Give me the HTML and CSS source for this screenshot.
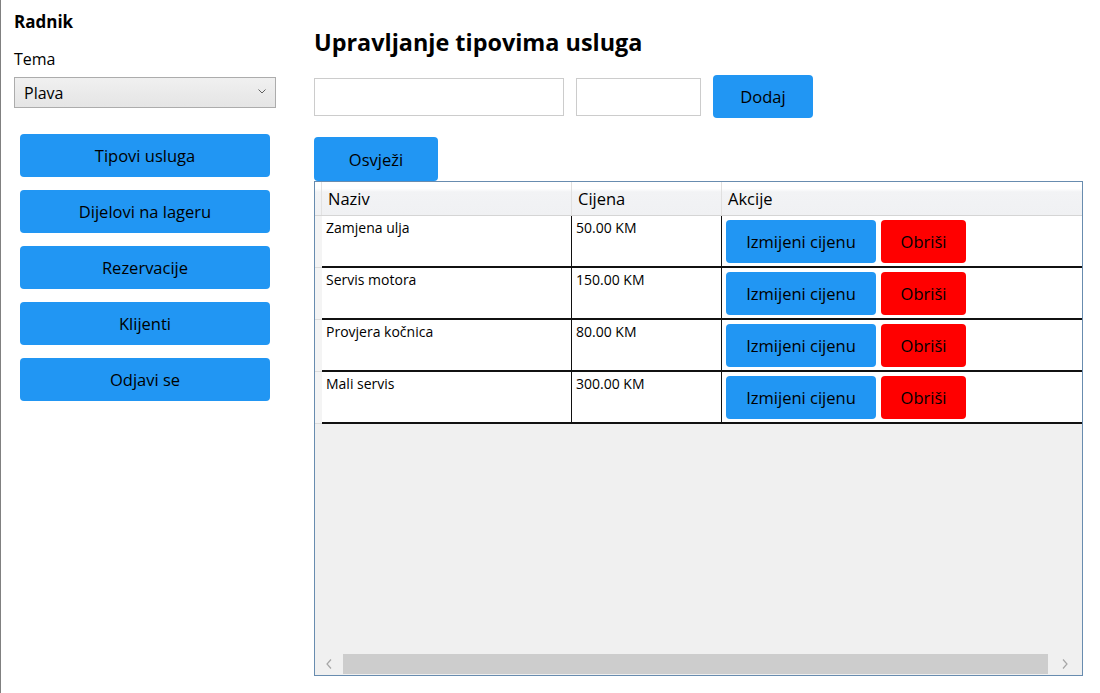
FILE: index.html
```html
<!DOCTYPE html>
<html lang="bs">
<head>
<meta charset="utf-8">
<title>Upravljanje tipovima usluga</title>
<link rel="stylesheet" href="styles.css">
</head>
<body>
<div class="app">
  <aside class="sidebar">
    <div class="role">Radnik</div>
    <div class="label">Tema</div>
    <div class="select">
      <span class="select-value">Plava</span>
      <svg class="chevron" width="8" height="5" viewBox="0 0 8 5"><polyline points="0.5,0.5 4,4 7.5,0.5" fill="none" stroke="#606060" stroke-width="1"/></svg>
    </div>
    <nav class="nav">
      <button class="btn nav-btn">Tipovi usluga</button>
      <button class="btn nav-btn">Dijelovi na lageru</button>
      <button class="btn nav-btn">Rezervacije</button>
      <button class="btn nav-btn">Klijenti</button>
      <button class="btn nav-btn">Odjavi se</button>
    </nav>
  </aside>
  <main class="content">
    <h1 class="title">Upravljanje tipovima usluga</h1>
    <div class="form-row">
      <input class="field field-name" type="text">
      <input class="field field-price" type="text">
      <button class="btn btn-add">Dodaj</button>
    </div>
    <button class="btn btn-refresh">Osvježi</button>
    <div class="grid">
      <div class="grid-head">
        <div class="rh"></div>
        <div class="hc">Naziv</div>
        <div class="hc">Cijena</div>
        <div class="hc hc-last">Akcije</div>
      </div>
      <div class="grid-row">
        <div class="rh"></div>
        <div class="cell">Zamjena ulja</div>
        <div class="cell">50.00 KM</div>
        <div class="cell cell-act"><button class="btn btn-edit">Izmijeni cijenu</button><button class="btn btn-del">Obriši</button></div>
      </div>
      <div class="grid-row">
        <div class="rh"></div>
        <div class="cell">Servis motora</div>
        <div class="cell">150.00 KM</div>
        <div class="cell cell-act"><button class="btn btn-edit">Izmijeni cijenu</button><button class="btn btn-del">Obriši</button></div>
      </div>
      <div class="grid-row">
        <div class="rh"></div>
        <div class="cell">Provjera kočnica</div>
        <div class="cell">80.00 KM</div>
        <div class="cell cell-act"><button class="btn btn-edit">Izmijeni cijenu</button><button class="btn btn-del">Obriši</button></div>
      </div>
      <div class="grid-row">
        <div class="rh"></div>
        <div class="cell">Mali servis</div>
        <div class="cell">300.00 KM</div>
        <div class="cell cell-act"><button class="btn btn-edit">Izmijeni cijenu</button><button class="btn btn-del">Obriši</button></div>
      </div>
      <div class="grid-fill"></div>
      <div class="hscroll">
        <span class="arrow arrow-left"><svg width="6" height="10" viewBox="0 0 6 10"><polyline points="5,0.5 1,5 5,9.5" fill="none" stroke="#a6a6a6" stroke-width="1.2"/></svg></span>
        <div class="thumb"></div>
        <span class="arrow arrow-right"><svg width="6" height="10" viewBox="0 0 6 10"><polyline points="1,0.5 5,5 1,9.5" fill="none" stroke="#a6a6a6" stroke-width="1.2"/></svg></span>
      </div>
    </div>
  </main>
</div>
</body>
</html>
```
FILE: styles.css
```css
* { box-sizing: border-box; }
html, body { margin: 0; padding: 0; }
body {
  width: 1100px;
  height: 693px;
  overflow: hidden;
  background: #fff;
  color: #000;
  font-family: "Open Sans", "Noto Sans", sans-serif;
}
.app {
  display: flex;
  height: 693px;
}
.sidebar {
  width: 300px;
  flex: 0 0 300px;
  border-left: 1px solid #808080;
  padding: 11px 24px 0 13px;
  display: flex;
  flex-direction: column;
}
.role {
  font-size: 17px;
  font-weight: 700;
  line-height: 22px;
}
.label {
  margin-top: 16px;
  font-size: 16px;
  line-height: 21px;
}
.select {
  margin-top: 7px;
  width: 262px;
  height: 31px;
  border: 1px solid #acacac;
  background: linear-gradient(#f0f0f0, #e5e5e5);
  display: flex;
  align-items: center;
  justify-content: space-between;
  padding: 0 9px 0 9px;
  font-size: 16px;
}
.chevron { margin-top: -3px; }
.nav {
  margin-top: 26px;
  margin-left: 6px;
  display: flex;
  flex-direction: column;
  gap: 13px;
}
.btn {
  font-family: inherit;
  font-size: 16.5px;
  color: #000;
  background: #2196f3;
  border: none;
  border-radius: 4px;
  padding: 0;
  height: 43px;
  cursor: pointer;
}
.nav-btn { width: 250px; }
.content {
  flex: 1;
  padding: 26px 17px 0 14px;
  display: flex;
  flex-direction: column;
  align-items: flex-start;
}
.title {
  margin: 0;
  font-size: 23.4px;
  font-weight: 700;
  line-height: 32px;
}
.form-row {
  margin-top: 17px;
  display: flex;
  align-items: center;
  gap: 12px;
}
.field {
  height: 38px;
  border: 1px solid #cccccc;
  background: #fff;
  font-family: inherit;
  font-size: 16px;
  padding: 0 4px;
  outline: none;
}
.field-name { width: 250px; }
.field-price { width: 125px; }
.btn-add { width: 100px; }
.btn-refresh {
  margin-top: 19px;
  width: 124px;
  height: 44px;
}
.grid {
  width: 769px;
  height: 495px;
  border: 1px solid #688caf;
  background: #f0f0f0;
  display: flex;
  flex-direction: column;
}
.grid-head, .grid-row {
  display: grid;
  grid-template-columns: 7px 250px 150px 1fr;
}
.grid-head {
  height: 34px;
  background: linear-gradient(#ffffff 0%, #ffffff 20%, #f2f3f5 30%, #f0f1f3 100%);
  border-bottom: 1px solid #d5d5d5;
}
.grid-head .rh { border-right: 1px solid #e2e2e2; }
.hc {
  font-size: 16.5px;
  line-height: 33px;
  padding-left: 6px;
  border-right: 1px solid #e0e0e0;
}
.hc-last { border-right: none; }
.grid-row {
  height: 52px;
  background: #fff;
}
.grid-row .rh {
  background: #f4f4f4;
  border-bottom: 1px solid #dcdcdc;
}
.cell {
  border-bottom: 2px solid #111;
  border-right: 1px solid #111;
  font-size: 14px;
  line-height: 19px;
  padding: 2px 4px 0 4px;
}
.cell-act {
  border-right: none;
  padding: 4px 0 0 4px;
  display: flex;
  align-items: flex-start;
  gap: 5px;
}
.btn-edit { width: 150px; }
.btn-del { width: 85px; background: #ff0000; }
.grid-fill { flex: 1; }
.hscroll {
  height: 20px;
  margin-bottom: 1px;
  display: flex;
  align-items: stretch;
}
.arrow {
  display: flex;
  align-items: center;
  justify-content: center;
}
.arrow-left { width: 28px; }
.arrow-right { width: 34px; }
.thumb {
  flex: 1;
  background: #cdcdcd;
}
```
